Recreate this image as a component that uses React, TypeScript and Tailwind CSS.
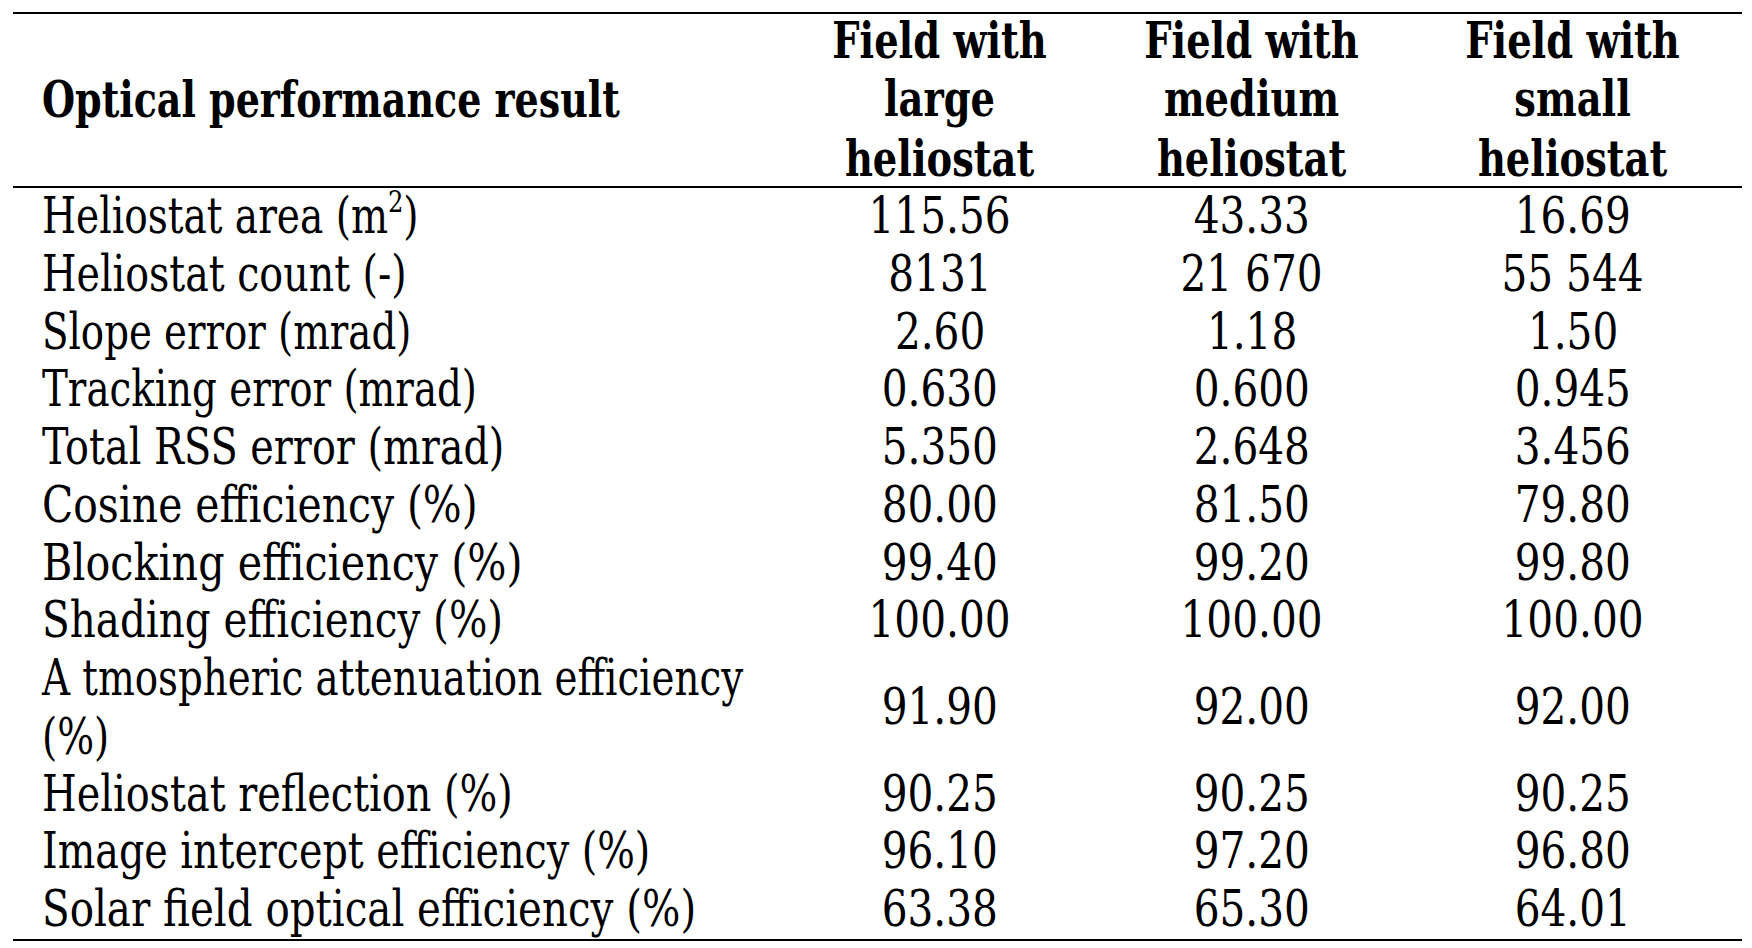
import React from "react";

const rows: [React.ReactNode, string, string, string, string][] = [
  [<>Heliostat area (m<sup className="text-[0.62em] relative -top-[0.14em] align-super leading-none">2</sup>)</>, "115.56", "43.33", "16.69", "scale-x-[0.905]"],
  ["Heliostat count (-)", "8131", "21 670", "55 544", "scale-x-[0.916]"],
  ["Slope error (mrad)", "2.60", "1.18", "1.50", "scale-x-[0.896]"],
  ["Tracking error (mrad)", "0.630", "0.600", "0.945", "scale-x-[0.898]"],
  ["Total RSS error (mrad)", "5.350", "2.648", "3.456", "scale-x-[0.921]"],
  ["Cosine efficiency (%)", "80.00", "81.50", "79.80", "scale-x-[0.946]"],
  ["Blocking efficiency (%)", "99.40", "99.20", "99.80", "scale-x-[0.955]"],
  ["Shading efficiency (%)", "100.00", "100.00", "100.00", "scale-x-[0.937]"],
  [<>A tmospheric attenuation efficiency<br />(%)</>, "91.90", "92.00", "92.00", "scale-x-[0.898]"],
  ["Heliostat reflection (%)", "90.25", "90.25", "90.25", "scale-x-[0.921]"],
  ["Image intercept efficiency (%)", "96.10", "97.20", "96.80", "scale-x-[0.918]"],
  ["Solar field optical efficiency (%)", "63.38", "65.30", "64.01", "scale-x-[0.935]"],
];

function Val({ v, w }: { v: string; w: string }) {
  return (
    <div className={`${w} flex items-center justify-center`}>
      <span className="inline-block whitespace-nowrap scale-x-[0.94] scale-y-[1.03] origin-center">{v}</span>
    </div>
  );
}

function Head({ a, b, w }: { a: string; b: string; w: string }) {
  return (
    <div className={`${w} flex justify-center`}>
      <span className="inline-block text-center whitespace-nowrap scale-x-[0.89] scale-y-[1.03] origin-center">
        {a}
        <br />
        {b}
        <br />
        heliostat
      </span>
    </div>
  );
}

export default function App() {
  const font = {
    fontFamily: '"DejaVu Serif Condensed", "DejaVu Serif", serif',
  } as React.CSSProperties;
  return (
    <div className="w-[1752px] h-[948px] bg-white text-black overflow-hidden pt-[12px]" style={font}>
      <div className="ml-[13px] w-[1729px] border-t-2 border-b-2 border-black text-[48px] leading-[57.75px]">
        <div className="flex h-[174px] border-b-2 border-black font-bold leading-[57.33px]">
          <div className="w-[767px] pl-[29px] flex items-center pt-[2px]">
            <span className="inline-block whitespace-nowrap scale-x-[0.88] scale-y-[1.03] origin-left">Optical performance result</span>
          </div>
          <Head a="Field with" b="large" w="w-[320px]" />
          <Head a="Field with" b="medium" w="w-[304px]" />
          <Head a="Field with" b="small" w="w-[338px]" />
        </div>
        {rows.map((r, i) => (
          <div key={i} className="flex">
            <div className="w-[767px] pl-[29px]">
              <span className={`inline-block whitespace-nowrap scale-y-[1.03] origin-left ${r[4]}`}>{r[0]}</span>
            </div>
            <Val v={r[1]} w="w-[320px]" />
            <Val v={r[2]} w="w-[304px]" />
            <Val v={r[3]} w="w-[338px]" />
          </div>
        ))}
      </div>
    </div>
  );
}
